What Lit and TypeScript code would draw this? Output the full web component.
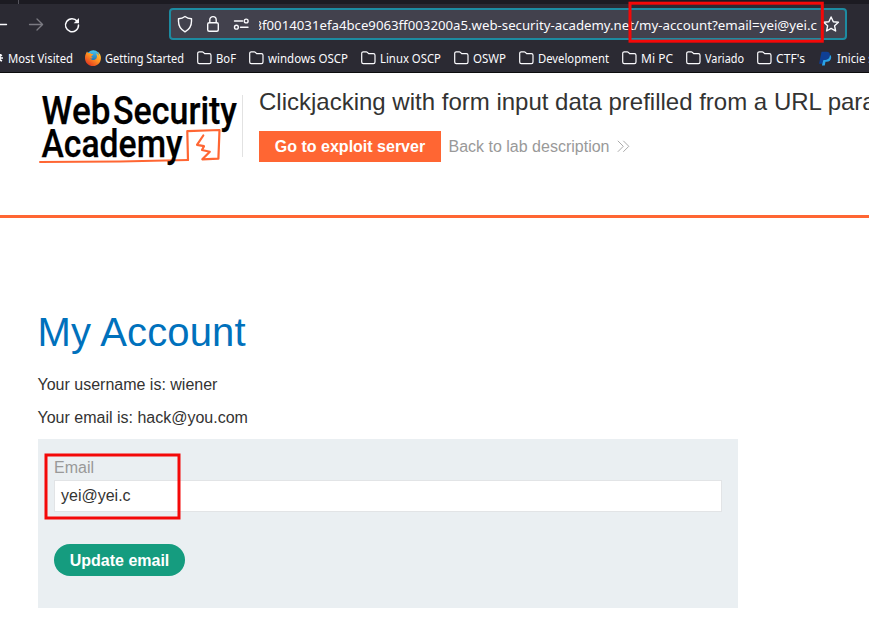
import { LitElement, html, css, svg } from "lit";
import { customElement, property } from "lit/decorators.js";

/* One line of text set to an exact width, with its baseline inside a 20px box. */
@customElement("fit-text")
class FitText extends LitElement {
  @property() text = "";
  @property({ type: Number }) width = 0;
  @property({ type: Number }) size = 12;
  static styles = css`
    :host { display: block; flex: none; height: 20px; }
    svg { display: block; overflow: visible; }
    text { font-family: "Noto Sans", "Open Sans", sans-serif; fill: #fbfbfe; }
  `;
  render() {
    return html`<svg width=${this.width} height="20">
      <text x="0" y="15" font-size=${this.size} textLength=${this.width} lengthAdjust="spacingAndGlyphs">${this.text}</text>
    </svg>`;
  }
}

const folder = svg`<path d="M.7 2.400a1.600 1.600 0 0 1 1.600-1.600h2.900c.5 0 .9.2 1.200.5l1.300 1.400h4.700a1.600 1.600 0 0 1 1.600 1.600v6.800a1.600 1.600 0 0 1-1.600 1.600H2.300A1.600 1.600 0 0 1 .7 11.100z" fill="none" stroke="#fbfbfe" stroke-width="1.2"/>`;

const folders: [string, number][] = [
  ["BoF", 20], ["windows OSCP", 80], ["Linux OSCP", 61], ["OSWP", 33],
  ["Development", 71], ["Mi PC", 32], ["Variado", 39], ["CTF's", 29],
];

@customElement("browser-bar")
class BrowserBar extends LitElement {
  static styles = css`
    :host { display: block; height: 73px; background: #2b2a33; box-sizing: border-box; border-bottom: 1px solid #0c0c0d; overflow: hidden; }
    .tabs { height: 4px; background: #1c1b22; }
    .tick { width: 1px; height: 4px; margin-left: 18px; background: #56555e; }
    .nav { display: flex; height: 40px; align-items: center; }
    .buttons { width: 169px; flex: none; }
    .buttons svg, .icons svg, .star { display: block; }
    .url { display: flex; align-items: center; box-sizing: border-box; width: 678px; height: 32px; border: 2px solid #1d8ba1; border-radius: 4px; background: #42414d; }
    .icons { flex: none; width: 88px; }
    .address { display: flex; width: 558px; flex: none; overflow: hidden; justify-content: flex-end; height: 22px; padding-top: 2px; box-sizing: border-box; }
    .star { flex: none; margin-left: 6px; }
    .marks { display: flex; align-items: center; height: 28px; gap: 13px; white-space: nowrap; }
    .mark { display: flex; align-items: center; flex: none; gap: 4px; }
    .mark svg { flex: none; }
    .mark.first { width: 73px; margin-right: -1px; }
    .mark.pay { gap: 5px; margin-left: 1px; }
  `;
  render() {
    return html`
      <div class="tabs"><div class="tick"></div></div>
      <div class="nav">
        <div class="buttons">
          <svg width="169" height="40" fill="none" stroke-linecap="round" stroke-linejoin="round">
            <path d="M-6 20.500H6.500" stroke="#fbfbfe" stroke-width="1.4"/>
            <path d="M29.500 20.500H42M37 15l5.600 5.500L37 26" stroke="#7b7a82" stroke-width="1.3"/>
            <path d="M77.200 17.300A6.500 6.500 0 1 0 78.500 21" stroke="#fbfbfe" stroke-width="1.5"/>
            <path d="M79 14v5.300h-5.300z" fill="#fbfbfe" stroke="none"/>
          </svg>
        </div>
        <div class="url">
          <div class="icons">
            <svg width="88" height="28" fill="none" stroke="#fbfbfe" stroke-width="1.4" stroke-linejoin="round" stroke-linecap="round">
              <path d="M14 6.500c2 1.500 4.200 2.100 6.500 2.300v2.400c0 4.500-2.100 8.200-6.500 10.600C9.600 19.400 7.500 15.700 7.500 11.200V8.800c2.300-.2 4.500-.8 6.500-2.300z"/>
              <rect x="36.700" y="12.700" width="10.600" height="8.600" rx="1.500"/>
              <path d="M38.800 12.500V9.800a3.200 3.200 0 0 1 6.400 0V12.500"/>
              <path d="M63.500 11h8M69.500 17.200h7.500"/>
              <circle cx="75.200" cy="11" r="1.900"/><circle cx="65.400" cy="17.200" r="1.900"/>
            </svg>
          </div>
          <div class="address">
            <fit-text text="3" width="7" size="13.4"></fit-text>
            <fit-text text="f0014031efa4bce9063ff003200a5.web-security-academy.net" width="372" size="13.4"></fit-text>
            <fit-text text="/my-account?email=yei@yei.c" width="183" size="13.4"></fit-text>
          </div>
          <svg class="star" width="17" height="18" fill="none" stroke="#fbfbfe" stroke-width="1.4" stroke-linejoin="round">
            <path d="M8.100 2l2.200 4.700 5.100.6-3.800 3.500 1 5.200-4.500-2.600L3.600 16l1-5.200L.8 7.300l5.100-.6z"/>
          </svg>
        </div>
      </div>
      <div class="marks">
        <div class="mark first">
          <svg width="4" height="16"><path d="M-1 8h4M0 4v7M0 6l2-1M0 10l2 1" stroke="#fbfbfe" stroke-width="1.6"/></svg>
          <fit-text text="Most Visited" width="65"></fit-text>
        </div>
        <div class="mark">
          <svg width="16" height="16" viewBox="0 0 16 16">
            <defs>
              <linearGradient id="flame" x1="1" y1="0" x2=".2" y2="1"><stop offset="0" stop-color="#ffd43a"/><stop offset=".5" stop-color="#ff9022"/><stop offset="1" stop-color="#e02f20"/></linearGradient>
              <linearGradient id="globe" x1="0" y1="0" x2="0" y2="1"><stop offset="0" stop-color="#46c8f1"/><stop offset="1" stop-color="#14559e"/></linearGradient>
            </defs>
            <circle cx="8.300" cy="7" r="6.800" fill="url(#globe)"/>
            <path d="M1 3.500L2 1.600l1.200 1.700c1.200-.4 2.300-.2 3.200.6l1.800.2C8 5.200 7 5.500 6.300 6.200c.1 1 .4 1.300 1.500 1.500-1 1-2 .7-2.600.6.8 2 4.300 2.500 6 .4 1.300-1.700.8-4-.3-5.500C13 4 13.500 5 13.600 6c.5-1.500 0-3-.7-4 2.200 1.700 3.300 4 3 6.700C15.500 12.900 12.300 16 8.100 16 3.500 16 0 12.600 0 8.200 0 6.200.3 4.700 1 3.500z" fill="url(#flame)"/>
          </svg>
          <fit-text text="Getting Started" width="79"></fit-text>
        </div>
        ${folders.map(([name, w]) => html`<div class="mark">
          <svg width="15" height="14">${folder}</svg>
          <fit-text .text=${name} .width=${w}></fit-text>
        </div>`)}
        <div class="mark pay">
          <svg width="13" height="15" viewBox="0 0 12 14">
            <path d="M2.300 .8h4.500c2.600 0 3.700 1.500 3.200 3.700C9.500 7.200 8 8.300 5.700 8.300H4L3.200 12H0z" fill="#0f3f94"/>
            <path d="M10.200 3.800c1 .7 1.300 1.700 1 3C10.700 9.100 9.200 10 7.200 10H6l-.7 3.500H2.700l.4-1.800L4 8.300h1.700c2.500 0 4-1.300 4.500-4.500z" fill="#2aa3e8"/>
          </svg>
          <fit-text text="Inicie sesión" width="65"></fit-text>
        </div>
      </div>`;
  }
}

@customElement("academy-logo")
class AcademyLogo extends LitElement {
  static styles = css`
    :host { display: block; flex: none; width: 205px; height: 75px; }
    svg { display: block; overflow: visible; }
    text { font-family: Roboto, "Liberation Sans", sans-serif; font-weight: 500; font-size: 38px; fill: #000; stroke: #000; stroke-width: .25px; }
  `;
  render() {
    return html`<svg width="205" height="75" viewBox="38 93 205 75">
      <g fill="none" stroke="#f63" stroke-linejoin="round" stroke-linecap="round">
        <path d="M40 162L120 161.500L188 160" stroke-width="2"/>
        <path d="M188 160L187.300 131.200L219.500 130L218.400 158.600L202.300 159.300L209.800 151.800L202 150L204 146.200L197 144.800L203.300 135.500" stroke-width="2.200"/>
      </g>
      <text x="41.500" y="124" textLength="69" lengthAdjust="spacingAndGlyphs">Web</text>
      <text x="113" y="124" textLength="124" lengthAdjust="spacingAndGlyphs">Security</text>
      <text x="41.500" y="156.600" textLength="141" lengthAdjust="spacingAndGlyphs">Academy</text>
    </svg>`;
  }
}

@customElement("app-root")
class AppRoot extends LitElement {
  static styles = css`
    :host { display: block; position: relative; width: 869px; height: 628px; overflow: hidden; background: #fff; color: #333332; font: 16px/20px "Liberation Sans", Arial, sans-serif; }
    .lab { display: flex; box-sizing: border-box; height: 145px; padding: 20px 0 0 38px; border-bottom: 3px solid #f63; }
    .intro { box-sizing: border-box; margin-top: 2px; height: 62px; border-left: 1px solid #e2e2e2; padding-left: 16px; margin-left: -1px; }
    .title { margin: -8px 0 0; font-size: 24px; line-height: 30px; font-weight: 400; white-space: nowrap; }
    .links { display: flex; align-items: center; margin-top: 14px; height: 31px; white-space: nowrap; }
    .exploit { width: 182px; line-height: 31px; background: #f63; color: #fff; font-weight: 700; text-align: center; }
    .back { display: flex; align-items: center; gap: 8px; margin-left: 7.500px; color: #999; }
    .account { padding: 92px 0 0 37.500px; }
    .heading { margin: 0; font-size: 40px; line-height: 44px; font-weight: 400; color: #0071bc; letter-spacing: .15px; }
    p { margin: 21px 0 0; }
    p + p { margin-top: 13px; }
    .form { box-sizing: border-box; width: 700px; height: 169px; margin: 11px 0 0 .5px; padding: 19px 16px 0; background: #eaeff2; }
    .label { display: block; color: #999; }
    .field { box-sizing: border-box; height: 32px; margin-top: 2px; padding: 0 6px; border: 1px solid #e2e4e6; background: #fff; line-height: 30px; }
    .update { display: block; width: 131px; height: 32px; margin-top: 32px; padding: 1px 0 0; border: 0; border-radius: 16px; background: #159c7f; color: #fff; font: 700 16px/31px "Liberation Sans", Arial, sans-serif; }
    .marker { position: absolute; inset: 0; pointer-events: none; }
  `;
  render() {
    return html`
      <browser-bar></browser-bar>
      <header class="lab">
        <academy-logo></academy-logo>
        <div class="intro">
          <h2 class="title">Clickjacking with form input data prefilled from a URL parameter</h2>
          <div class="links">
            <div class="exploit">Go to exploit server</div>
            <div class="back">Back to lab description
              <svg width="13" height="13" fill="none" stroke="#aaa"><path d="M.8.800l5.500 5.500L.8 11.800M6.300.800l5.500 5.500-5.500 5.500"/></svg>
            </div>
          </div>
        </div>
      </header>
      <main class="account">
        <h1 class="heading">My Account</h1>
        <p>Your username is: wiener</p>
        <p>Your email is: hack@you.com</p>
        <div class="form">
          <span class="label">Email</span>
          <div class="field">yei@yei.c</div>
          <button class="update">Update email</button>
        </div>
      </main>
      <svg class="marker" width="869" height="628" fill="none" stroke="#f40808" stroke-width="3">
        <rect x="630" y="3.200" width="192.300" height="38"/>
        <rect x="46" y="455" width="133" height="63"/>
      </svg>`;
  }
}
